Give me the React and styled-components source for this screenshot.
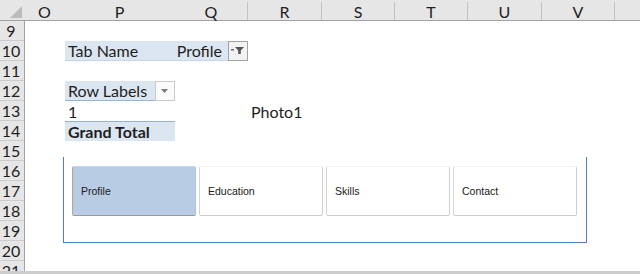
import React from 'react'
import styled, { createGlobalStyle } from 'styled-components'

const GlobalStyle = createGlobalStyle`
  body {
    margin: 0;
    background: #fff;
  }
`

const Sheet = styled.div`
  width: 640px;
  height: 274px;
  display: flex;
  flex-direction: column;
  overflow: hidden;
  font-family: Lato, 'Liberation Sans', sans-serif;
  color: #1e1e1e;
`

const ColumnBar = styled.div`
  display: flex;
  height: 21px;
  flex: none;
  box-sizing: border-box;
  background: #e6e6e6;
  border-bottom: 1px solid #a2a2a2;
`

const Corner = styled.div`
  width: 25px;
  flex: none;
  display: flex;
  align-items: flex-end;
  justify-content: flex-end;
  padding: 0 3px 2px 0;
  box-sizing: border-box;
`

const ColHead = styled.div`
  width: ${p => p.$w}px;
  flex: none;
  box-sizing: border-box;
  display: flex;
  align-items: center;
  justify-content: center;
  font-size: 16px;
  margin-top: 2px;
  border-right: ${p => (p.$divider ? '1px solid #c2c2c2' : '1px solid transparent')};
`

const Body = styled.div`
  display: flex;
  flex: 1;
  min-height: 0;
`

const RowHeads = styled.div`
  width: 25px;
  flex: none;
  box-sizing: border-box;
  background: #e6e6e6;
  border-right: 1px solid #a2a2a2;
  display: flex;
  flex-direction: column;
  overflow: hidden;
`

const RowHead = styled.div`
  height: 20px;
  flex: none;
  box-sizing: border-box;
  border-bottom: 1px solid #cdcdcd;
  display: flex;
  align-items: center;
  justify-content: center;
  padding-right: 2px;
  font-size: 16px;
`

const Canvas = styled.div`
  flex: 1;
  display: flex;
  flex-direction: column;
`

const CellGrid = styled.div`
  display: grid;
  grid-template-columns: 40px 110px 73px 74px 1fr;
  grid-template-rows: repeat(6, 20px);
`

const Cell = styled.div`
  grid-column: ${p => p.$col} / span ${p => p.$span || 1};
  grid-row: ${p => p.$row};
  display: flex;
  align-items: center;
  box-sizing: border-box;
  padding-left: 3px;
  font-size: 16px;
  font-weight: ${p => (p.$bold ? 700 : 400)};
  background: ${p => (p.$band ? '#dce6f1' : 'transparent')};
  border-top: ${p => (p.$lineTop ? '1px solid #95b3d7' : 'none')};
  border-bottom: ${p => p.$lineBottom || 'none'};
`

const Grow = styled.span`
  flex: 1;
`

const FieldValue = styled.span`
  margin-right: 6px;
`

const FieldButton = styled.div`
  width: 20px;
  height: 20px;
  flex: none;
  box-sizing: border-box;
  display: flex;
  align-items: center;
  justify-content: center;
  background: ${p => (p.$plain ? '#fafafa' : '#f2f2f2')};
  border: 1px solid ${p => (p.$plain ? '#c9c9c9' : '#a3a3a3')};
`

const Slicer = styled.div`
  margin: 16px 0 0 38px;
  width: 524px;
  height: 86px;
  box-sizing: border-box;
  border: 1px solid #4f81bd;
  border-top: none;
  padding: 9px 9px 0 8px;
  display: flex;
  gap: 3px;
  align-items: flex-start;
`

const SlicerItem = styled.div`
  width: 124px;
  height: 50px;
  flex: none;
  box-sizing: border-box;
  border: 1px solid;
  border-radius: 2px;
  border-color: ${p =>
    p.$selected ? '#c5d4e8 #b0c4de #9b9b9b #a8a8a8' : '#f3f3f3 #cfcfcf #cccccc #d6d6d6'};
  background: ${p => (p.$selected ? '#b8cce4' : '#fff')};
  display: flex;
  align-items: center;
  padding-left: 8px;
  font-family: 'Liberation Sans', Arial, sans-serif;
  font-size: 10.5px;
  color: #202020;
`

const BottomBar = styled.div`
  height: 3px;
  flex: none;
  background: #cdcdcd;
`

const columns = [
  { name: 'O', w: 40 },
  { name: 'P', w: 110 },
  { name: 'Q', w: 73, divider: true },
  { name: 'R', w: 74, divider: true },
  { name: 'S', w: 73, divider: true },
  { name: 'T', w: 73, divider: true },
  { name: 'U', w: 74, divider: true },
  { name: 'V', w: 73, divider: true },
  { name: '', w: 30 },
]

const rows = [9, 10, 11, 12, 13, 14, 15, 16, 17, 18, 19, 20, 21]

const tabs = ['Profile', 'Education', 'Skills', 'Contact']

const FilterIcon = () => (
  <svg width="14" height="9" viewBox="0 0 14 9">
    <rect x="0" y="3" width="3" height="1.5" fill="#6b6b6b" />
    <path d="M4 1h9L9.8 4.5V8H7.2V4.5z" fill="#555" />
  </svg>
)

const DropIcon = () => (
  <svg width="8" height="4" viewBox="0 0 8 4">
    <path d="M0 0h7L3.5 4z" fill="#7a7a7a" />
  </svg>
)

const CornerMark = () => (
  <svg width="12" height="12" viewBox="0 0 12 12">
    <path d="M12 0v12H0z" fill="#bcbcbc" />
  </svg>
)

const App = () => (
  <Sheet>
    <GlobalStyle />
    <ColumnBar>
      <Corner>
        <CornerMark />
      </Corner>
      {columns.map(c => (
        <ColHead key={c.name || 'end'} $w={c.w} $divider={c.divider}>
          {c.name}
        </ColHead>
      ))}
    </ColumnBar>
    <Body>
      <RowHeads>
        {rows.map(r => (
          <RowHead key={r}>{r}</RowHead>
        ))}
      </RowHeads>
      <Canvas>
        <CellGrid>
          <Cell $col={2} $span={2} $row={2} $band $lineBottom="1px solid #c6d6ea">
            <Grow>Tab Name</Grow>
            <FieldValue>Profile</FieldValue>
            <FieldButton>
              <FilterIcon />
            </FieldButton>
          </Cell>
          <Cell $col={2} $row={4} $band $lineBottom="1px solid #95b3d7">
            <Grow>Row Labels</Grow>
            <FieldButton $plain>
              <DropIcon />
            </FieldButton>
          </Cell>
          <Cell $col={2} $row={5}>1</Cell>
          <Cell $col={4} $row={5}>Photo1</Cell>
          <Cell $col={2} $row={6} $band $bold $lineTop>
            Grand Total
          </Cell>
        </CellGrid>
        <Slicer>
          {tabs.map(t => (
            <SlicerItem key={t} $selected={t === 'Profile'}>
              {t}
            </SlicerItem>
          ))}
        </Slicer>
      </Canvas>
    </Body>
    <BottomBar />
  </Sheet>
)

export default App
